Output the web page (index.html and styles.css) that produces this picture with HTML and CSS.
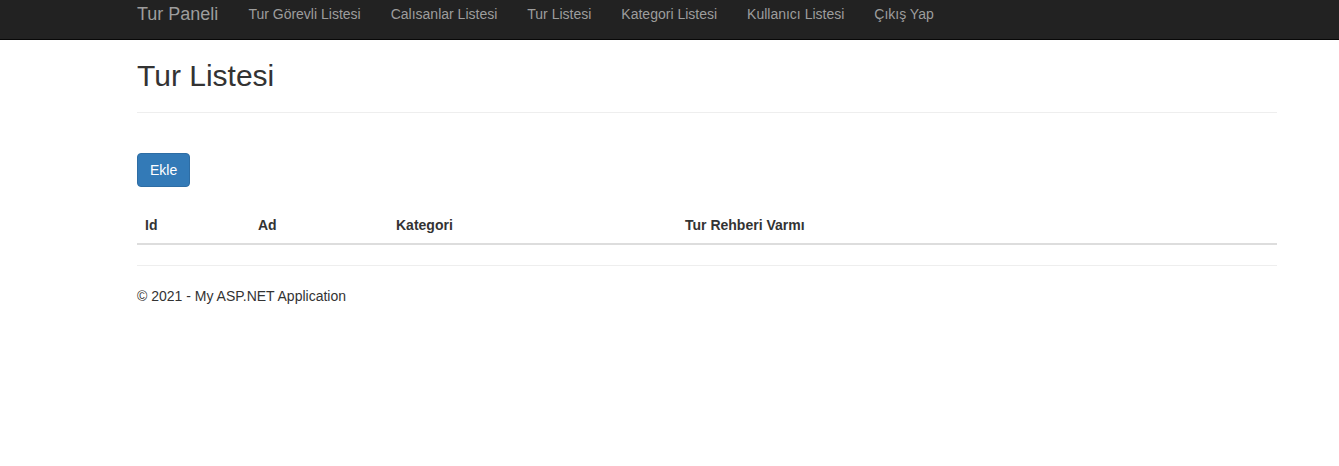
FILE: index.html
```html
<!DOCTYPE html>
<html lang="tr">
<head>
<meta charset="utf-8">
<title>Tur Listesi</title>
<link rel="stylesheet" href="styles.css">
</head>
<body>
<nav class="navbar">
  <div class="container nav-inner">
    <a class="brand" href="#">Tur Paneli</a>
    <ul class="nav">
      <li><a href="#">Tur Görevli Listesi</a></li>
      <li><a href="#">Calısanlar Listesi</a></li>
      <li><a href="#">Tur Listesi</a></li>
      <li><a href="#">Kategori Listesi</a></li>
      <li><a href="#">Kullanıcı Listesi</a></li>
      <li><a href="#">Çıkış Yap</a></li>
    </ul>
  </div>
</nav>
<main class="container body-content">
  <div class="page-header">
    <h2 class="title">Tur Listesi</h2>
  </div>
  <p class="actions"><a class="btn" href="#">Ekle</a></p>
  <table class="table">
    <thead>
      <tr>
        <th class="c-id">Id</th>
        <th class="c-ad">Ad</th>
        <th class="c-kat">Kategori</th>
        <th>Tur Rehberi Varmı</th>
      </tr>
    </thead>
    <tbody></tbody>
  </table>
  <hr class="sep">
  <footer class="footer">
    <p>© 2021 - My ASP.NET Application</p>
  </footer>
</main>
</body>
</html>
```
FILE: styles.css
```css
* { box-sizing: border-box; }
html, body { margin: 0; padding: 0; }
body {
  font-family: "Liberation Sans", Arial, Helvetica, sans-serif;
  font-size: 14px;
  line-height: 20px;
  color: #333;
  background: #fff;
}
a { text-decoration: none; }
.container {
  width: 1140px;
  margin-left: 137px;
}
.navbar {
  background: #222;
  border-bottom: 1px solid #080808;
  height: 40px;
}
.nav-inner {
  display: flex;
  align-items: flex-start;
}
.brand {
  font-size: 18px;
  line-height: 20px;
  padding-top: 4px;
  color: #9d9d9d;
  margin-right: 15px;
}
.nav {
  display: flex;
  list-style: none;
  margin: 0;
  padding: 0;
}
.nav a {
  display: block;
  padding: 4px 15px 0;
  line-height: 20px;
  color: #9d9d9d;
}
.page-header {
  margin-top: 19px;
  padding-bottom: 20px;
  border-bottom: 1px solid #eee;
}
.title {
  margin: 0;
  font-size: 30px;
  font-weight: 500;
  line-height: 33px;
}
.actions {
  margin: 40px 0 0;
}
.btn {
  display: inline-block;
  padding: 6px 12px;
  font-size: 14px;
  line-height: 20px;
  color: #fff;
  background: #337ab7;
  border: 1px solid #2e6da4;
  border-radius: 4px;
}
.table {
  width: 100%;
  border-collapse: collapse;
  margin-top: 20px;
}
.table th {
  text-align: left;
  font-weight: bold;
  padding: 8px;
  line-height: 20px;
  border-bottom: 2px solid #ddd;
}
.c-id { width: 113px; }
.c-ad { width: 138px; }
.c-kat { width: 289px; }
.sep {
  margin: 20px 0;
  border: 0;
  border-top: 1px solid #eee;
}
.footer p { margin: 0; }
```
